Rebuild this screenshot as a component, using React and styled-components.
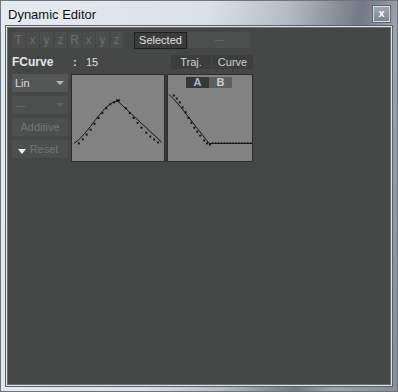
import styled, { createGlobalStyle } from "styled-components";

const GlobalStyle = createGlobalStyle`
  html, body { margin: 0; padding: 0; background: #d6dce3; }
  body { font-family: "Liberation Sans", Arial, sans-serif; }
`;

const riseDots = [
  [6, 69], [10, 65], [14, 60], [18, 55], [22, 49], [26, 43], [30, 38],
  [34, 33], [38, 29], [42, 27], [45, 25], [47, 25],
];
const fallDots = [
  [54, 33], [58, 38], [62, 43], [66, 48], [70, 53], [75, 58], [79, 62],
  [83, 65], [87, 68],
];
const curveDots = [
  [5, 20], [8, 23], [11, 27], [14, 32], [17, 37], [20, 43], [23, 48],
  [26, 53], [29, 57], [32, 61], [36, 66], [39, 69], [42, 70],
];
const flatDots = [45, 48, 51, 54, 57, 60, 63, 66, 69, 72, 75, 78, 81, 84];

const axisButtons = ["T", "x", "y", "z", "R", "x", "y", "z"];

function App() {
  return (
    <>
      <GlobalStyle />
      <Window>
        <TitleBar>
          <Title>Dynamic Editor</Title>
          <CloseButton>x</CloseButton>
        </TitleBar>
        <Panel>
          <Content>
            <Editor>
              <Row>
                <AxisGroup>
                  {axisButtons.map((a, i) => (
                    <AxisButton key={i}>{a}</AxisButton>
                  ))}
                </AxisGroup>
                <SelectedButton>Selected</SelectedButton>
                <DisabledBox $width={63}>---</DisabledBox>
              </Row>
              <CurveRow>
                <CurveLabel>FCurve</CurveLabel>
                <Colon>:</Colon>
                <Value>15</Value>
                <Spacer />
                <ModeButton $width={40}>Traj.</ModeButton>
                <ModeButton $width={41}>Curve</ModeButton>
              </CurveRow>
              <EditorRow>
                <SideColumn>
                  <Dropdown>
                    Lin
                    <Arrow />
                  </Dropdown>
                  <Dropdown $disabled>
                    ---
                    <Arrow $disabled />
                  </Dropdown>
                  <SideButton>Additive</SideButton>
                  <SideButton>
                    <WhiteArrow />
                    Reset
                  </SideButton>
                </SideColumn>
                <Graphs>
                  <Graph $width={94}>
                    <GraphSvg viewBox="0 0 94 88">
                      <path
                        d="M2 70 C14 62 24 44 34 34 C40 28 44 27 47 27 L92 69"
                        fill="none"
                        stroke="#111"
                        strokeWidth="1"
                      />
                      {[...riseDots, ...fallDots].map(([x, y], i) => (
                        <rect key={i} x={x} y={y} width="2" height="2" fill="#111" />
                      ))}
                    </GraphSvg>
                  </Graph>
                  <Graph $width={86}>
                    <GraphSvg viewBox="0 0 86 88">
                      <path
                        d="M1 20 C8 25 30 55 42 70 L86 70"
                        fill="none"
                        stroke="#111"
                        strokeWidth="1"
                      />
                      {curveDots.map(([x, y], i) => (
                        <rect key={i} x={x} y={y} width="2" height="2" fill="#111" />
                      ))}
                      {flatDots.map((x) => (
                        <rect key={x} x={x} y={69} width="1.5" height="1.5" fill="#111" />
                      ))}
                    </GraphSvg>
                    <Tabs>
                      <Tab $active>A</Tab>
                      <Tab>B</Tab>
                    </Tabs>
                  </Graph>
                </Graphs>
              </EditorRow>
            </Editor>
          </Content>
        </Panel>
      </Window>
    </>
  );
}

const Window = styled.div`
  width: 398px;
  height: 392px;
  box-sizing: border-box;
  display: flex;
  flex-direction: column;
  border: 1px solid #6d757e;
  background: linear-gradient(
    100deg,
    #e6ebf0 0%,
    #dbe1e8 45%,
    #b4bcc5 62%,
    #717a84 78%,
    #9aa3ad 86%,
    #858e98 100%
  );
`;

const TitleBar = styled.div`
  height: 24px;
  display: flex;
  align-items: center;
  justify-content: space-between;
  padding: 0 7px 0 7px;
`;

const Title = styled.span`
  font-family: "Liberation Sans", Arial, sans-serif;
  font-size: 13px;
  color: #111;
  margin-top: 2px;
`;

const CloseButton = styled.div`
  width: 15px;
  height: 14px;
  align-self: flex-start;
  margin-top: 5px;
  border: 1px solid #d7dce2;
  outline: 1px solid #5e666f;
  background: linear-gradient(#9ea6b0, #7d8690);
  color: #fff;
  font-weight: bold;
  font-size: 11px;
  line-height: 13px;
  text-align: center;
`;

const Panel = styled.div`
  flex: 1;
  margin: 0 4px 4px 4px;
  border: 1px solid #5c6168;
  outline: 1px solid #e1e4e7;
  outline-offset: -2px;
  display: flex;
`;

const Content = styled.div`
  flex: 1;
  margin: 1px;
  border: 1px solid #6c6e6d;
  background: #454746;
  padding: 4px 4px;
  font-family: "Liberation Sans", Arial, sans-serif;
  font-size: 11px;
`;

const Editor = styled.div`
  width: 241px;
  display: flex;
  flex-direction: column;
`;

const Row = styled.div`
  display: flex;
  align-items: flex-start;
  height: 17px;
`;

const AxisGroup = styled.div`
  display: flex;
  gap: 1px;
  margin-right: 11px;
`;

const AxisButton = styled.div`
  width: 13px;
  height: 16px;
  background: #4c4e4d;
  color: #6d6f6e;
  font-size: 12px;
  line-height: 16px;
  text-align: center;
`;

const SelectedButton = styled.div`
  width: 51px;
  height: 15px;
  border: 1px solid #1e1f1e;
  background: #3b3c3c;
  color: #e2e2e2;
  font-size: 11px;
  line-height: 15px;
  text-align: center;
  margin-right: 1px;
`;

const DisabledBox = styled.div`
  width: ${(p) => p.$width}px;
  height: 16px;
  background: #4d4f4e;
  color: #6c6e6d;
  font-size: 10px;
  line-height: 16px;
  text-align: center;
`;

const CurveRow = styled.div`
  display: flex;
  align-items: center;
  height: 14px;
  margin-top: 6px;
`;

const CurveLabel = styled.span`
  font-weight: bold;
  font-size: 12px;
  color: #e6e6e6;
  width: 61px;
`;

const Colon = styled.span`
  font-weight: bold;
  color: #e0e0e0;
  width: 13px;
`;

const Value = styled.span`
  color: #e0e0e0;
  font-size: 11px;
`;

const Spacer = styled.div`
  flex: 1;
`;

const ModeButton = styled.div`
  width: ${(p) => p.$width}px;
  height: 14px;
  margin-left: 1px;
  background: #3c3e3d;
  color: #cfcfcf;
  font-size: 11px;
  line-height: 14px;
  text-align: center;
`;

const EditorRow = styled.div`
  display: flex;
  margin-top: 5px;
  gap: 3px;
`;

const SideColumn = styled.div`
  width: 56px;
  display: flex;
  flex-direction: column;
  gap: 4px;
`;

const Dropdown = styled.div`
  height: 18px;
  background: ${(p) => (p.$disabled ? "#4d4f4e" : "#555756")};
  color: ${(p) => (p.$disabled ? "#6c6e6d" : "#dedede")};
  font-size: 11px;
  line-height: 18px;
  padding: 0 4px 0 3px;
  display: flex;
  align-items: center;
  justify-content: space-between;
`;

const Arrow = styled.span`
  width: 0;
  height: 0;
  border-left: 4px solid transparent;
  border-right: 4px solid transparent;
  border-top: 4px solid ${(p) => (p.$disabled ? "#636564" : "#b5b7b6")};
`;

const SideButton = styled.div`
  height: 18px;
  background: #4d4f4e;
  color: #737574;
  font-size: 11px;
  line-height: 18px;
  display: flex;
  align-items: center;
  justify-content: center;
  gap: 4px;
`;

const WhiteArrow = styled.span`
  width: 0;
  height: 0;
  margin-top: 4px;
  margin-left: -4px;
  border-left: 4px solid transparent;
  border-right: 4px solid transparent;
  border-top: 5px solid #f2f2f2;
`;

const Graphs = styled.div`
  display: flex;
  gap: 2px;
  background: #3a3b3a;
`;

const Graph = styled.div`
  position: relative;
  width: ${(p) => p.$width}px;
  height: 88px;
  box-sizing: border-box;
  border: 1px solid #2a2b2a;
  background: #818281;
`;

const GraphSvg = styled.svg`
  display: block;
  width: 100%;
  height: 100%;
`;

const Tabs = styled.div`
  position: absolute;
  top: 2px;
  left: 18px;
  display: flex;
`;

const Tab = styled.div`
  width: 23px;
  height: 11px;
  background: ${(p) => (p.$active ? "#363837" : "#5d5f5e")};
  color: ${(p) => (p.$active ? "#a9b8cc" : "#cfcfcf")};
  font-weight: bold;
  font-size: 11px;
  line-height: 11px;
  text-align: center;
`;

export default App;
